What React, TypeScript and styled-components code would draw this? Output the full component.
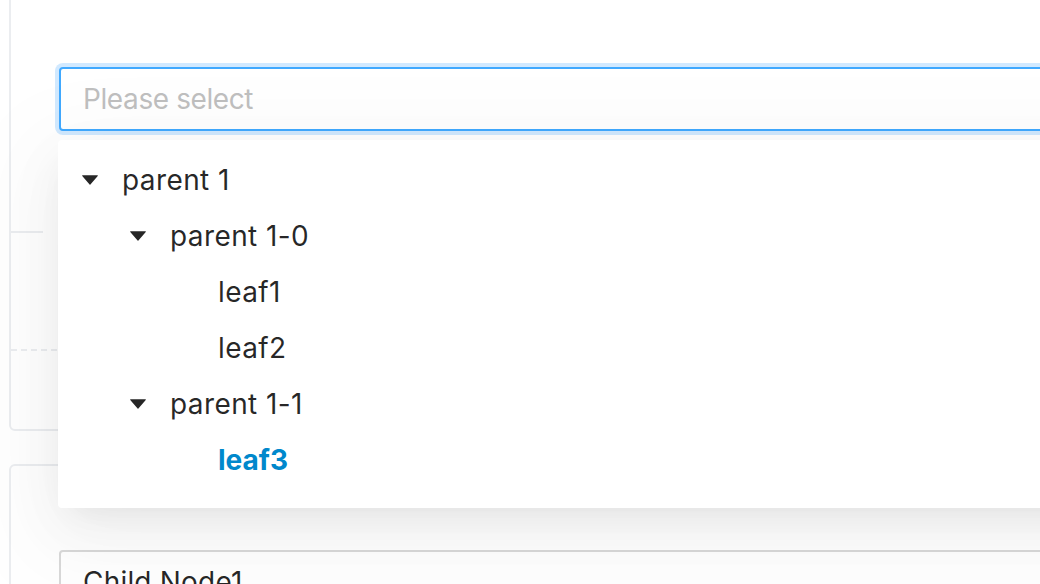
import React from "react";
import styled, { createGlobalStyle } from "styled-components";

const Global = createGlobalStyle`
  html, body { margin: 0; padding: 0; background: #fff; overflow: hidden; }
  body { font-family: Inter, "Liberation Sans", sans-serif; width: 1040px; height: 584px; }
`;

const Page = styled.div`
  padding-left: 9px;
  width: 1400px;
`;

const CodeBox = styled.section<{ $top: number }>`
  margin-top: ${(p) => p.$top}px;
  border: 2px solid #ebedf0;
  border-radius: 6px;
`;

const Demo = styled.div<{ $bordered?: boolean }>`
  padding: 84px 48px 100px;
  border-bottom: ${(p) => (p.$bordered ? "2px solid #ebedf0" : "none")};
`;

const Meta = styled.div`
  position: relative;
  height: 116px;
`;

const MetaTitle = styled.div`
  position: absolute;
  top: -16px;
  left: 32px;
  width: 200px;
  height: 40px;
  background: #fff;
`;

const Actions = styled.div`
  height: 78px;
  border-top: 2px dashed #ebedf0;
`;

const SelectWrap = styled.div`
  position: relative;
`;

const SelectBox = styled.div<{ $focused?: boolean }>`
  box-sizing: border-box;
  height: 64px;
  padding: 0 22px;
  display: flex;
  align-items: center;
  border: 2px solid ${(p) => (p.$focused ? "#40a9ff" : "#d9d9d9")};
  border-radius: 4px;
  box-shadow: ${(p) => (p.$focused ? "0 0 0 4px rgba(24,144,255,0.2)" : "none")};
  background: #fff;
  font-size: 28px;
  letter-spacing: 0.2px;
  color: rgba(0, 0, 0, 0.85);
`;

const Placeholder = styled.span`
  color: #bfbfbf;
  letter-spacing: -0.4px;
`;

const Dropdown = styled.div`
  position: absolute;
  top: 73px;
  left: -1px;
  right: 0;
  z-index: 10;
  box-sizing: border-box;
  padding: 16px 8px;
  background: #fff;
  border-radius: 4px;
  box-shadow: 0 12px 32px -16px rgba(0, 0, 0, 0.08),
    0 18px 56px 0 rgba(0, 0, 0, 0.05), 0 24px 96px 32px rgba(0, 0, 0, 0.03);
`;

const TreeNode = styled.div`
  display: flex;
  align-items: center;
  padding-bottom: 8px;
  font-size: 28px;
  line-height: 48px;
  color: rgba(0, 0, 0, 0.85);
`;

const Indent = styled.span<{ $level: number }>`
  display: inline-block;
  width: ${(p) => p.$level * 48}px;
  flex: none;
`;

const Switcher = styled.span`
  width: 48px;
  height: 48px;
  flex: none;
  display: flex;
  align-items: center;
  justify-content: center;
  color: rgba(0, 0, 0, 0.85);
`;

const Title = styled.span<{ $highlight?: boolean }>`
  padding: 0 8px;
  letter-spacing: ${(p) => (p.$highlight ? "0" : "0.4px")};
  font-weight: ${(p) => (p.$highlight ? 700 : 400)};
  color: ${(p) => (p.$highlight ? "#08c" : "inherit")};
`;

const Caret = () => (
  <svg width="20" height="20" viewBox="64 64 896 896" fill="currentColor">
    <path d="M840.4 300H183.6c-19.7 0-30.7 20.8-18.5 35l328.4 380.8c9.4 10.9 27.5 10.9 37 0L858.9 335c12.2-14.2 1.2-35-18.5-35z" />
  </svg>
);

type Node = { title: string; level: number; parent?: boolean; highlight?: boolean };

const nodes: Node[] = [
  { title: "parent 1", level: 0, parent: true },
  { title: "parent 1-0", level: 1, parent: true },
  { title: "leaf1", level: 2 },
  { title: "leaf2", level: 2 },
  { title: "parent 1-1", level: 1, parent: true },
  { title: "leaf3", level: 2, highlight: true },
];

export default function App() {
  return (
    <>
      <Global />
      <Page>
        <CodeBox $top={-19}>
          <Demo $bordered>
            <SelectWrap>
              <SelectBox $focused>
                <Placeholder>Please select</Placeholder>
              </SelectBox>
              <Dropdown>
                {nodes.map((n) => (
                  <TreeNode key={n.title}>
                    <Indent $level={n.level} />
                    <Switcher>{n.parent ? <Caret /> : null}</Switcher>
                    <Title $highlight={n.highlight}>{n.title}</Title>
                  </TreeNode>
                ))}
              </Dropdown>
            </SelectWrap>
          </Demo>
          <Meta>
            <MetaTitle />
          </Meta>
          <Actions />
        </CodeBox>
        <CodeBox $top={33}>
          <Demo>
            <SelectBox>Child Node1</SelectBox>
          </Demo>
        </CodeBox>
      </Page>
    </>
  );
}
